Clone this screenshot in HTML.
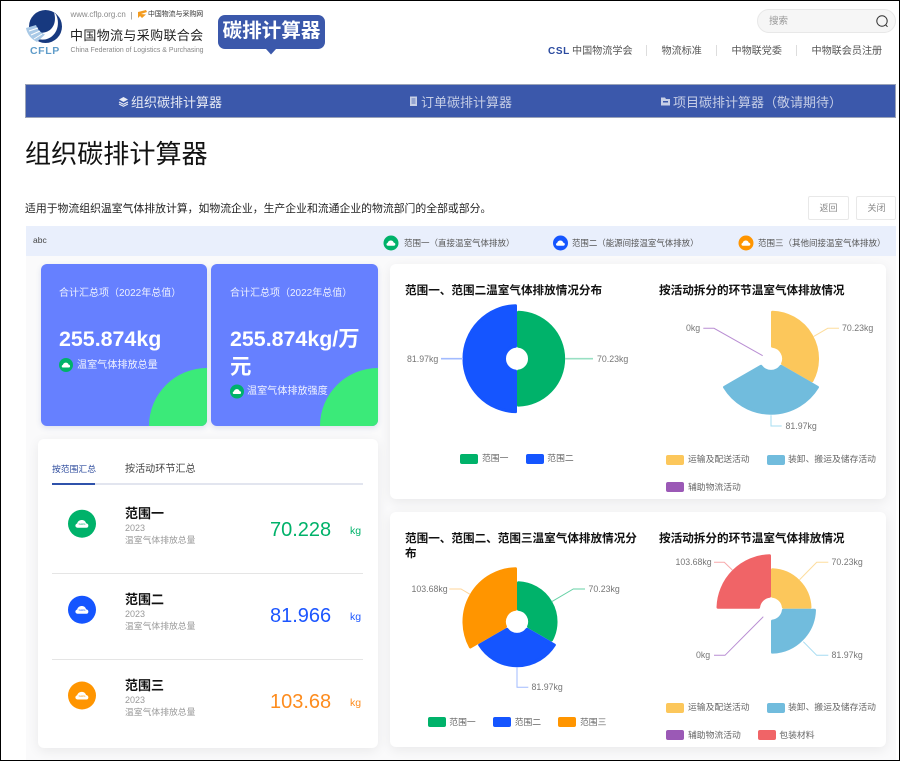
<!DOCTYPE html>
<html lang="zh-CN">
<head>
<meta charset="utf-8">
<title>组织碳排计算器</title>
<style>
html,body{margin:0;padding:0;background:#fff;}
#p{position:relative;width:900px;height:761px;overflow:hidden;background:#fff;font-family:"Liberation Sans","Noto Sans CJK SC",sans-serif;color:#333;}
.t{position:absolute;white-space:nowrap;line-height:1;}
.b{position:absolute;box-sizing:border-box;}
.card{position:absolute;background:#fff;border-radius:6px;box-shadow:0 3px 12px rgba(0,0,0,.07);}
.blue{position:absolute;background:#6680ff;border-radius:6px;overflow:hidden;box-shadow:0 2px 6px rgba(60,80,160,.15);}
.blue i{position:absolute;right:-58px;bottom:-58px;width:116px;height:116px;border-radius:50%;background:#3bea79;}
.ct{font-weight:bold;font-size:11.6px;color:#111;}
.lg{font-size:8.8px;color:#666;}
.lb{font-size:8.8px;color:#777;}
.sw{position:absolute;width:18px;height:10px;border-radius:2px;}
.sv{position:absolute;left:0;top:0;}
</style>
</head>
<body>
<div id="p">
<!-- logo -->
<svg class="sv" width="900" height="761" viewBox="0 0 900 761" style="z-index:1">
  <circle cx="45.5" cy="26.5" r="16.5" fill="#17397f"/>
  <path d="M54 12.5 C57 22 53 31 44 32.5 C38 33.5 33.5 31.5 30.5 27.5 L28 31 C32 38 38 40 45 39.5 C56 37.5 61 25 56 14.5 Z" fill="#fff"/>
  <path d="M26 28 L36 25 C37.5 29.5 41 33 45 34.5 L37 42 C31 39 27 34 26 28 Z" fill="#a9c9e6"/>
  <path d="M29 31 L38 28 M31 35 L40 31 M34 39 L42 34" stroke="#fff" stroke-width="1"/>
  <path d="M138 12 L146 10 L147 12 L141 14 L146 14.5 L142 18 L140 16 L138 18 Z" fill="#f39b1f"/>
  <!-- badge triangle -->
  <path d="M266 49 L276 49 L271 54.5 Z" fill="#3b58ab"/>
  <!-- search -->
  <circle cx="882" cy="21" r="5.2" fill="none" stroke="#333" stroke-width="1"/>
  <path d="M885.8 25 L887.5 26.8" stroke="#333" stroke-width="1"/>
  <!-- nav icons -->
  <path d="M119 99.5 L123.5 97 L128 99.5 L123.5 102 Z" fill="#e8ebf5"/>
  <path d="M119 102 L123.5 104.3 L128 102 M119 104 L123.5 106.3 L128 104" fill="none" stroke="#e8ebf5" stroke-width="1.1"/>
  <path d="M410 96.5 H417 V106 H410 Z" fill="#c8d0e6"/>
  <path d="M411.5 99 H415.5 M411.5 101 H415.5 M411.5 103 H415.5" stroke="#3b58ab" stroke-width=".8"/>
  <path d="M661 97.5 H665 L666 99 H670 V105.5 H661 Z" fill="#c8d0e6"/>
  <path d="M663 101 H668 V102.5 H663 Z" fill="#3b58ab"/>
</svg>

<div class="t" style="left:70.5px;top:11px;font-size:7.9px;color:#888;">www.cflp.org.cn</div>
<div class="t" style="left:130.5px;top:11px;font-size:8.6px;color:#888;">|</div>
<div class="t" style="left:148px;top:11.5px;font-size:6.9px;color:#333;">中国物流与采购网</div>
<div class="t" style="left:70px;top:29px;font-size:13px;color:#222;letter-spacing:.35px;">中国物流与采购联合会</div>
<div class="t" style="left:70.5px;top:47.5px;font-size:6.95px;color:#888;">China Federation of Logistics &amp; Purchasing</div>
<div class="t" style="left:30px;top:45.5px;font-size:10.5px;font-weight:bold;color:#5f9cc9;letter-spacing:.6px;">CFLP</div>

<div class="b" style="left:218px;top:15px;width:107px;height:34px;background:#3b58ab;border-radius:7px;"></div>
<div class="t" style="left:222.5px;top:22px;font-size:19.6px;font-weight:bold;color:#fff;">碳排计算器</div>

<div class="b" style="left:757px;top:9px;width:139px;height:24px;background:#f6f6f6;border:1px solid #e8e8e8;border-radius:12px;"></div>
<div class="t" style="left:769px;top:16.5px;font-size:9.5px;color:#999;">搜索</div>

<div class="t" style="left:548px;top:47px;font-size:10px;font-weight:bold;color:#2a4a9f;letter-spacing:.6px;">CSL</div>
<div class="t" style="left:572px;top:47px;font-size:10.1px;color:#555;">中国物流学会</div>
<div class="t" style="left:661.5px;top:47px;font-size:10.1px;color:#555;">物流标准</div>
<div class="t" style="left:731.5px;top:47px;font-size:10.1px;color:#555;">中物联党委</div>
<div class="t" style="left:811.5px;top:47px;font-size:10.1px;color:#555;">中物联会员注册</div>
<div class="b" style="left:646px;top:45px;width:1px;height:11px;background:#ddd;"></div>
<div class="b" style="left:716px;top:45px;width:1px;height:11px;background:#ddd;"></div>
<div class="b" style="left:796px;top:45px;width:1px;height:11px;background:#ddd;"></div>

<!-- nav -->
<div class="b" style="left:25px;top:84px;width:871px;height:33.5px;background:#3b58ab;border:1px solid #9aa3b8;"></div>
<div class="t" style="left:131px;top:95.5px;font-size:13px;color:#e8ebf5;z-index:1">组织碳排计算器</div>
<div class="t" style="left:421px;top:95.5px;font-size:13px;color:#c5cde6;z-index:1">订单碳排计算器</div>
<div class="t" style="left:673px;top:95.5px;font-size:13px;color:#c5cde6;z-index:1">项目碳排计算器（敬请期待）</div>

<div class="t" style="left:25px;top:140.5px;font-size:26.1px;color:#111;">组织碳排计算器</div>
<div class="t" style="left:25px;top:203.5px;font-size:10.85px;color:#222;">适用于物流组织温室气体排放计算，如物流企业，生产企业和流通企业的物流部门的全部或部分。</div>
<div class="b" style="left:808px;top:196px;width:41px;height:24px;border:1px solid #e8e8e8;border-radius:2px;"></div>
<div class="b" style="left:856px;top:196px;width:40px;height:24px;border:1px solid #e8e8e8;border-radius:2px;"></div>
<div class="t" style="left:819.5px;top:203.5px;font-size:9px;color:#888;">返回</div>
<div class="t" style="left:867.5px;top:203.5px;font-size:9px;color:#888;">关闭</div>

<!-- panel -->
<div class="b" style="left:26px;top:226px;width:870px;height:535px;background:#fafafb;"></div>
<div class="b" style="left:26px;top:226px;width:870px;height:30px;background:#e9effc;"></div>
<div class="t" style="left:33px;top:236px;font-size:8.5px;color:#444;">abc</div>
<div class="t" style="left:404px;top:239px;font-size:8.5px;color:#555;">范围一（直接温室气体排放）</div>
<div class="t" style="left:572px;top:239px;font-size:8.45px;color:#555;">范围二（能源间接温室气体排放）</div>
<div class="t" style="left:758px;top:239px;font-size:8.5px;color:#555;">范围三（其他间接温室气体排放）</div>

<!-- blue cards -->
<div class="blue" style="left:41px;top:263.5px;width:166px;height:162.5px;"><i></i></div>
<div class="blue" style="left:211px;top:263.5px;width:167px;height:162.5px;"><i></i></div>
<div class="t" style="left:59px;top:288.5px;font-size:10px;color:#eef1ff;z-index:1">合计汇总项（2022年总值）</div>
<div class="t" style="left:230px;top:288.5px;font-size:10px;color:#eef1ff;z-index:1">合计汇总项（2022年总值）</div>
<div class="t" style="left:59px;top:329px;font-size:21.4px;font-weight:bold;color:#fff;z-index:1">255.874kg</div>
<div class="t" style="left:230px;top:325px;font-size:21.4px;font-weight:bold;color:#fff;white-space:normal;width:135px;line-height:28px;z-index:1">255.874kg/万元</div>
<div class="t" style="left:77px;top:360.5px;font-size:10.1px;color:#f2f4ff;z-index:1">温室气体排放总量</div>
<div class="t" style="left:247px;top:387px;font-size:10.1px;color:#f2f4ff;z-index:1">温室气体排放强度</div>

<!-- tab card -->
<div class="card" style="left:38px;top:438.5px;width:340px;height:309.5px;"></div>
<div class="t" style="left:52px;top:464.5px;font-size:8.8px;color:#2f4d9e;z-index:1">按范围汇总</div>
<div class="t" style="left:125px;top:465px;font-size:10.1px;color:#444;z-index:1">按活动环节汇总</div>
<div class="b" style="left:52px;top:483px;width:311px;height:1.5px;background:#e2e5ef;"></div>
<div class="b" style="left:52px;top:483px;width:43px;height:2px;background:#2f52ab;"></div>

<div class="t" style="left:125px;top:507px;font-size:13px;font-weight:bold;color:#111;">范围一</div>
<div class="t" style="left:125px;top:523.5px;font-size:9px;color:#999;">2023</div>
<div class="t" style="left:125px;top:535.5px;font-size:8.8px;color:#999;">温室气体排放总量</div>
<div class="t" style="left:270px;top:520px;font-size:20px;color:#00b26a;">70.228</div>
<div class="t" style="left:350px;top:525.5px;font-size:10.5px;color:#00b26a;">kg</div>
<div class="b" style="left:52px;top:573px;width:311px;height:1px;background:#e5e5e5;"></div>

<div class="t" style="left:125px;top:593px;font-size:13px;font-weight:bold;color:#111;">范围二</div>
<div class="t" style="left:125px;top:609.5px;font-size:9px;color:#999;">2023</div>
<div class="t" style="left:125px;top:621.5px;font-size:8.8px;color:#999;">温室气体排放总量</div>
<div class="t" style="left:270px;top:606px;font-size:20px;color:#1c56ff;">81.966</div>
<div class="t" style="left:350px;top:611.5px;font-size:10.5px;color:#1c56ff;">kg</div>
<div class="b" style="left:52px;top:659px;width:311px;height:1px;background:#e5e5e5;"></div>

<div class="t" style="left:125px;top:679px;font-size:13px;font-weight:bold;color:#111;">范围三</div>
<div class="t" style="left:125px;top:695.5px;font-size:9px;color:#999;">2023</div>
<div class="t" style="left:125px;top:707.5px;font-size:8.8px;color:#999;">温室气体排放总量</div>
<div class="t" style="left:270px;top:692px;font-size:20px;color:#fd8c1e;">103.68</div>
<div class="t" style="left:350px;top:697.5px;font-size:10.5px;color:#fd8c1e;">kg</div>

<!-- chart cards -->
<div class="card" style="left:390px;top:264px;width:496px;height:235px;"></div>
<div class="card" style="left:390px;top:512px;width:496px;height:235px;"></div>
<div class="t ct" style="left:405px;top:285px;">范围一、范围二温室气体排放情况分布</div>
<div class="t ct" style="left:659px;top:285px;">按活动拆分的环节温室气体排放情况</div>
<div class="t ct" style="left:405px;top:531px;width:236px;white-space:normal;line-height:15px;">范围一、范围二、范围三温室气体排放情况分布</div>
<div class="t ct" style="left:659px;top:532.5px;">按活动拆分的环节温室气体排放情况</div>

<svg class="sv" width="900" height="761" viewBox="0 0 900 761" style="z-index:2">
  <defs>
    <g id="cl"><path d="M-4.5 4 C-7 4 -7.5 .5 -4.8 -.2 C-4 -4.5 3 -5 4 -.5 C7.2 -.2 7 4 4.5 4 Z" fill="#fff"/></g>
  </defs>
  <!-- header icons -->
  <circle cx="391" cy="243" r="7.5" fill="#00b26a"/><use href="#cl" transform="translate(391 243) scale(.68)"/>
  <circle cx="560.5" cy="243" r="7.5" fill="#1555ff"/><use href="#cl" transform="translate(560.5 243) scale(.68)"/>
  <circle cx="746" cy="243" r="7.5" fill="#ff9500"/><use href="#cl" transform="translate(746 243) scale(.68)"/>
  <!-- card icons -->
  <circle cx="66" cy="365" r="7" fill="#00b26a"/><use href="#cl" transform="translate(66 365) scale(.64)"/>
  <circle cx="237" cy="391.5" r="7" fill="#00b26a"/><use href="#cl" transform="translate(237 391.5) scale(.64)"/>
  <!-- list icons -->
  <circle cx="82" cy="523.7" r="14" fill="#00b26a"/><use href="#cl" transform="translate(82 523.7) scale(1)"/>
  <circle cx="82" cy="609.7" r="14" fill="#1555ff"/><use href="#cl" transform="translate(82 609.7) scale(1)"/>
  <circle cx="82" cy="695.5" r="14" fill="#ff9500"/><use href="#cl" transform="translate(82 695.5) scale(1)"/>
  <g font-size="3" text-anchor="middle" font-family="Liberation Sans, sans-serif">
    <text x="82" y="525" fill="#00b26a">GHG</text>
    <text x="82" y="611" fill="#1555ff">GHG</text>
    <text x="82" y="696.8" fill="#ff9500">GHG</text>
  </g>

  <g stroke-width="3" stroke-linejoin="round">
    <!-- chart 1 -->
    <path d="M518.5 312.22 A46.5 46.5 0 0 1 518.5 405.18 L518.5 371.11 A12.5 12.5 0 0 0 518.5 346.29 Z" fill="#00b26a" stroke="#00b26a"/>
    <path d="M515.5 305.72 A53 53 0 0 0 515.5 411.68 L515.5 371.11 A12.5 12.5 0 0 1 515.5 346.29 Z" fill="#1555ff" stroke="#1555ff"/>
    <!-- chart 2 -->
    <path d="M772.5 312.22 A46.5 46.5 0 0 1 812.02 380.65 L782.58 363.65 A12.5 12.5 0 0 0 772.5 346.29 Z" fill="#fcc75b" stroke="#fcc75b"/>
    <path d="M817.45 387.25 A54.5 54.5 0 0 1 724.55 387.25 L760.92 366.25 A12.5 12.5 0 0 0 781.08 366.25 Z" fill="#71bcdd" stroke="#71bcdd"/>
    <!-- chart 3 -->
    <path d="M518.5 582.73 A39 39 0 0 1 551.52 639.9 L528.58 626.65 A12.5 12.5 0 0 0 518.5 609.29 Z" fill="#00b26a" stroke="#00b26a"/>
    <path d="M554.35 645 A44 44 0 0 1 479.65 645 L506.92 629.25 A12.5 12.5 0 0 0 527.08 629.25 Z" fill="#1555ff" stroke="#1555ff"/>
    <path d="M470.35 646.9 A53 53 0 0 1 515.5 568.72 L515.5 609.29 A12.5 12.5 0 0 0 505.42 626.65 Z" fill="#ff9500" stroke="#ff9500"/>
    <!-- chart 4 -->
    <path d="M772.5 569.73 A39 39 0 0 1 809.97 607.2 L783.41 607.2 A12.5 12.5 0 0 0 772.5 596.29 Z" fill="#fcc75b" stroke="#fcc75b"/>
    <path d="M814.48 610.2 A43.5 43.5 0 0 1 772.5 652.18 L772.5 621.11 A12.5 12.5 0 0 0 783.41 610.2 Z" fill="#71bcdd" stroke="#71bcdd"/>
    <path d="M718.02 607.2 A53 53 0 0 1 769.5 555.72 L769.5 596.29 A12.5 12.5 0 0 0 758.59 607.2 Z" fill="#f06467" stroke="#f06467"/>
  </g>
  <g fill="none" stroke-width="1">
    <path d="M463 358.7 H441" stroke="#a2bbff" stroke-width="1.6"/>
    <path d="M565 358.7 H593" stroke="#99e0c3" stroke-width="1.6"/>
    <path d="M762.7 355.7 L714 328.3 H703.3" stroke="#b98ed3"/>
    <path d="M813.3 336.7 L827.7 328.3 H839" stroke="#fddd9d"/>
    <path d="M771 415.3 V426 H781.7" stroke="#a6dcf2"/>
    <path d="M551.7 601.7 L573.3 589 H585" stroke="#66d1a6"/>
    <path d="M517 667 V687.3 H528.3" stroke="#a2bbff"/>
    <path d="M470 594.3 L461 589 H449.3" stroke="#ffd599"/>
    <path d="M799.3 580 L816.7 562.3 H828.3" stroke="#fddd9d"/>
    <path d="M803.3 641.7 L816.7 655.3 H828.3" stroke="#a6dcf2"/>
    <path d="M763.3 616.7 L725 655.3 H714" stroke="#b98ed3"/>
    <path d="M732.3 570 L724.3 562.3 H714" stroke="#f8a9ab"/>
  </g>
</svg>

<div style="position:absolute;left:0;top:0;z-index:3;width:900px;height:761px;">
  <div class="t lb" style="left:407px;top:354.5px;">81.97kg</div>
  <div class="t lb" style="left:597px;top:354.5px;">70.23kg</div>
  <div class="t lb" style="left:686px;top:324px;">0kg</div>
  <div class="t lb" style="left:842px;top:324px;">70.23kg</div>
  <div class="t lb" style="left:785.5px;top:422px;">81.97kg</div>
  <div class="t lb" style="left:588.5px;top:584.5px;">70.23kg</div>
  <div class="t lb" style="left:531.5px;top:683px;">81.97kg</div>
  <div class="t lb" style="left:411.5px;top:584.5px;">103.68kg</div>
  <div class="t lb" style="left:831.5px;top:558px;">70.23kg</div>
  <div class="t lb" style="left:831.5px;top:651px;">81.97kg</div>
  <div class="t lb" style="left:696px;top:651px;">0kg</div>
  <div class="t lb" style="left:675.5px;top:558px;">103.68kg</div>

  <div class="sw" style="left:460.3px;top:454px;background:#00b26a;"></div><div class="t lg" style="left:482px;top:454px;">范围一</div>
  <div class="sw" style="left:525.7px;top:454px;background:#1555ff;"></div><div class="t lg" style="left:547.3px;top:454px;">范围二</div>

  <div class="sw" style="left:666.3px;top:455px;background:#fcc75b;"></div><div class="t lg" style="left:688px;top:455px;">运输及配送活动</div>
  <div class="sw" style="left:766.7px;top:455px;background:#71bcdd;"></div><div class="t lg" style="left:788px;top:455px;">装卸、搬运及储存活动</div>
  <div class="sw" style="left:666.3px;top:482.3px;background:#9b59b6;"></div><div class="t lg" style="left:688px;top:482.5px;">辅助物流活动</div>

  <div class="sw" style="left:427.7px;top:717px;background:#00b26a;"></div><div class="t lg" style="left:449.3px;top:717.5px;">范围一</div>
  <div class="sw" style="left:493px;top:717px;background:#1555ff;"></div><div class="t lg" style="left:514.7px;top:717.5px;">范围二</div>
  <div class="sw" style="left:558.3px;top:717px;background:#ff9500;"></div><div class="t lg" style="left:580px;top:717.5px;">范围三</div>

  <div class="sw" style="left:666.3px;top:702.7px;background:#fcc75b;"></div><div class="t lg" style="left:688px;top:703px;">运输及配送活动</div>
  <div class="sw" style="left:766.7px;top:702.7px;background:#71bcdd;"></div><div class="t lg" style="left:788px;top:703px;">装卸、搬运及储存活动</div>
  <div class="sw" style="left:666.3px;top:730.3px;background:#9b59b6;"></div><div class="t lg" style="left:688px;top:730.5px;">辅助物流活动</div>
  <div class="sw" style="left:757.7px;top:730.3px;background:#f06467;"></div><div class="t lg" style="left:779.3px;top:730.5px;">包装材料</div>
</div>

<!-- outer border -->
<div class="b" style="left:0;top:0;width:900px;height:761px;border:1px solid #000;z-index:5;"></div>
</div>
</body>
</html>
